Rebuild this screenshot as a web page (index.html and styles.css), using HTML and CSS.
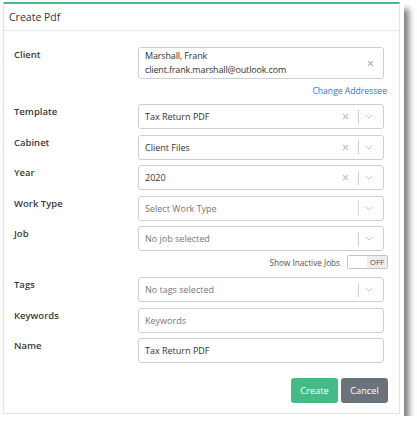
FILE: index.html
```html
<!DOCTYPE html>
<html>
<head>
<meta charset="utf-8">
<link rel="stylesheet" href="styles.css">
</head>
<body>
<div class="frame">
  <div class="modal">
    <div class="modal-header">Create Pdf</div>
    <div class="modal-body">
      <div class="row row-client">
        <div class="label">Client</div>
        <div class="field">
          <div class="box box-client">
            <div class="client-text">
              <div>Marshall, Frank</div>
              <div>client.frank.marshall@outlook.com</div>
            </div>
            <span class="clear">
              <svg width="7" height="7" viewBox="0 0 7 7"><path d="M1 1L6 6M6 1L1 6" stroke="#b8b8b8" stroke-width="1.2" fill="none"/></svg>
            </span>
          </div>
        </div>
      </div>
      <div class="link-row"><span class="link">Change Addressee</span></div>

      <div class="row">
        <div class="label">Template</div>
        <div class="field">
          <div class="box select"><span class="value">Tax Return PDF</span>
            <span class="clear"><svg width="7" height="7" viewBox="0 0 7 7"><path d="M1 1L6 6M6 1L1 6" stroke="#c4c4c4" stroke-width="1.2" fill="none"/></svg></span>
            <span class="sep"></span>
            <span class="chev"><svg width="8" height="5" viewBox="0 0 8 5"><path d="M0.8 0.8L4 4L7.2 0.8" stroke="#c4c4c4" stroke-width="1" fill="none"/></svg></span>
          </div>
        </div>
      </div>
      <div class="row">
        <div class="label">Cabinet</div>
        <div class="field">
          <div class="box select"><span class="value">Client Files</span>
            <span class="clear"><svg width="7" height="7" viewBox="0 0 7 7"><path d="M1 1L6 6M6 1L1 6" stroke="#c4c4c4" stroke-width="1.2" fill="none"/></svg></span>
            <span class="sep"></span>
            <span class="chev"><svg width="8" height="5" viewBox="0 0 8 5"><path d="M0.8 0.8L4 4L7.2 0.8" stroke="#c4c4c4" stroke-width="1" fill="none"/></svg></span>
          </div>
        </div>
      </div>
      <div class="row">
        <div class="label">Year</div>
        <div class="field">
          <div class="box select"><span class="value">2020</span>
            <span class="clear"><svg width="7" height="7" viewBox="0 0 7 7"><path d="M1 1L6 6M6 1L1 6" stroke="#c4c4c4" stroke-width="1.2" fill="none"/></svg></span>
            <span class="sep"></span>
            <span class="chev"><svg width="8" height="5" viewBox="0 0 8 5"><path d="M0.8 0.8L4 4L7.2 0.8" stroke="#c4c4c4" stroke-width="1" fill="none"/></svg></span>
          </div>
        </div>
      </div>
      <div class="row">
        <div class="label">Work Type</div>
        <div class="field">
          <div class="box select"><span class="value placeholder">Select Work Type</span>
            <span class="sep"></span>
            <span class="chev"><svg width="8" height="5" viewBox="0 0 8 5"><path d="M0.8 0.8L4 4L7.2 0.8" stroke="#c4c4c4" stroke-width="1" fill="none"/></svg></span>
          </div>
        </div>
      </div>
      <div class="row row-job">
        <div class="label">Job</div>
        <div class="field">
          <div class="box select"><span class="value placeholder">No job selected</span>
            <span class="sep"></span>
            <span class="chev"><svg width="8" height="5" viewBox="0 0 8 5"><path d="M0.8 0.8L4 4L7.2 0.8" stroke="#c4c4c4" stroke-width="1" fill="none"/></svg></span>
          </div>
        </div>
      </div>
      <div class="toggle-row">
        <span class="toggle-label">Show Inactive Jobs</span>
        <span class="toggle"><span class="toggle-on"></span><span class="toggle-off">OFF</span></span>
      </div>
      <div class="row">
        <div class="label">Tags</div>
        <div class="field">
          <div class="box select"><span class="value placeholder">No tags selected</span>
            <span class="sep"></span>
            <span class="chev"><svg width="8" height="5" viewBox="0 0 8 5"><path d="M0.8 0.8L4 4L7.2 0.8" stroke="#c4c4c4" stroke-width="1" fill="none"/></svg></span>
          </div>
        </div>
      </div>
      <div class="row row-kw">
        <div class="label">Keywords</div>
        <div class="field">
          <div class="box input"><span class="value placeholder">Keywords</span></div>
        </div>
      </div>
      <div class="row row-name">
        <div class="label">Name</div>
        <div class="field">
          <div class="box input"><span class="value">Tax Return PDF</span></div>
        </div>
      </div>
      <div class="actions">
        <span class="btn btn-create">Create</span>
        <span class="btn btn-cancel">Cancel</span>
      </div>
    </div>
  </div>
</div>
</body>
</html>
```

FILE: styles.css
```css
html, body {
  margin: 0;
  padding: 0;
  background: #ffffff;
}
body {
  font-family: "Open Sans", "Noto Sans", sans-serif;
  color: #333;
}
.frame {
  margin-left: 3px;
  margin-top: 2px;
  width: 401px;
  padding-bottom: 2px;
  background: #fff;
  box-shadow: 5px 7px 6px rgba(0,0,0,0.5);
}
.modal {
  width: 395px;
  border: 1px solid #e2e2e2;
  border-top: 2px solid #46bb87;
  background: #fff;
}
.modal-header {
  height: 26px;
  line-height: 26px;
  padding-left: 5px;
  font-size: 10.5px;
  color: #333;
  border-bottom: 1px solid #e8e8e8;
}
.modal-body {
  padding: 16px 15px 10px 10px;
}
.row {
  display: flex;
  margin-bottom: 5.5px;
}
.label {
  width: 124px;
  flex: none;
  font-size: 9.5px;
  font-weight: 600;
  color: #3a3a3a;
  padding-top: 1px;
  line-height: 13px;
}
.field {
  flex: 1;
}
.box {
  box-sizing: border-box;
  height: 25px;
  border: 1px solid #cfcfcf;
  border-radius: 3px;
  display: flex;
  align-items: center;
  font-size: 9px;
  color: #333;
}
.box-client {
  height: 32px;
  padding-left: 6px;
}
.client-text {
  flex: 1;
  line-height: 14px;
  font-size: 9px;
  letter-spacing: -0.15px;
}
.box-client .clear {
  width: 14px;
  margin-right: 6px;
  display: flex;
  justify-content: center;
}
.link-row {
  display: flex;
  justify-content: flex-end;
  margin-right: -3px;
  margin-top: 6px;
  margin-bottom: 6px;
  height: 13px;
  line-height: 13px;
}
.link {
  font-size: 8.6px;
  color: #1f7ae0;
}
.select, .input {
  padding-left: 6px;
}
.value {
  flex: 1;
  white-space: nowrap;
}
.placeholder {
  color: #777;
}
.select .clear {
  width: 10px;
  display: flex;
  justify-content: center;
  margin-right: 8px;
}
.sep {
  width: 1px;
  height: 14px;
  background: #d0d0d0;
}
.chev {
  width: 20px;
  padding-right: 4px;
  display: flex;
  justify-content: center;
  align-items: center;
}
.toggle-row {
  display: flex;
  justify-content: flex-end;
  align-items: center;
  margin-right: -4px;
  margin-top: -1.5px;
  margin-bottom: 8px;
  height: 14px;
}
.toggle-label {
  font-size: 8.2px;
  color: #555;
  margin-right: 7px;
}
.toggle {
  box-sizing: border-box;
  width: 41px;
  height: 14px;
  border: 1px solid #c4c4c4;
  border-radius: 2px;
  display: flex;
  overflow: hidden;
}
.toggle-on {
  flex: 1;
  background: #fff;
}
.toggle-off {
  width: 20px;
  background: #eeeeee;
  font-size: 8px;
  color: #555;
  text-align: center;
  line-height: 12px;
}
.row-kw {
  margin-bottom: 5px;
}
.actions {
  display: flex;
  justify-content: flex-end;
  gap: 3px;
  margin-top: 15px;
  margin-right: -4px;
}
.btn {
  width: 47px;
  height: 25px;
  line-height: 25px;
  text-align: center;
  border-radius: 3px;
  color: #fff;
  font-size: 9.3px;
}
.btn-create {
  background: #42bb86;
}
.btn-cancel {
  background: #6b727a;
}
```
